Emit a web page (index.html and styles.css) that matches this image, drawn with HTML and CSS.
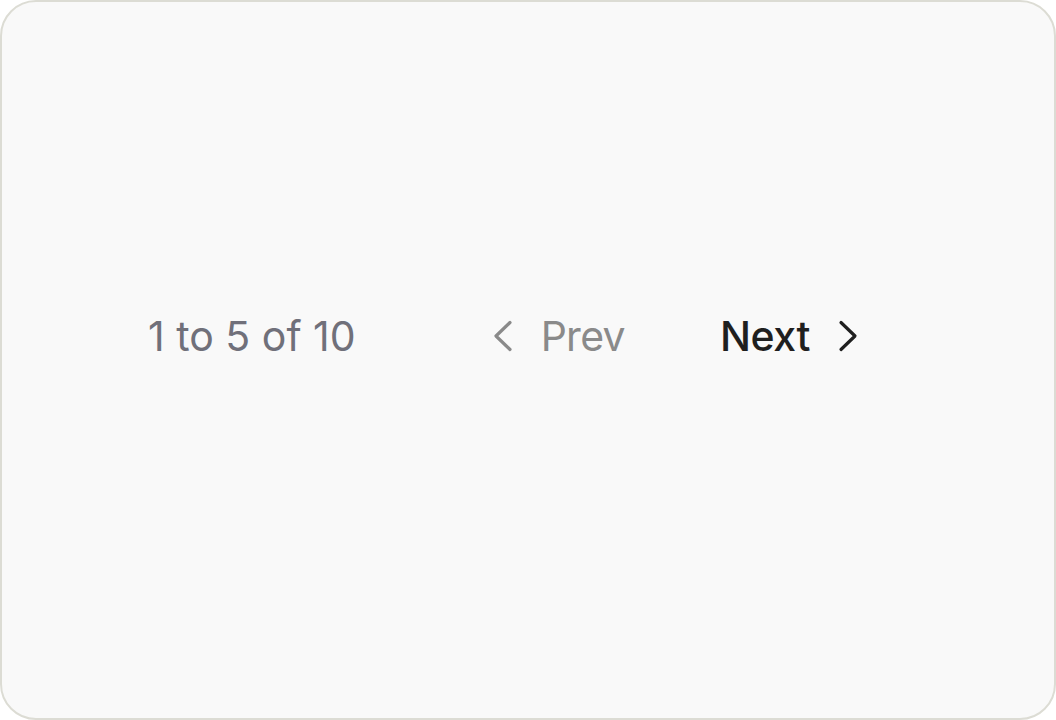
FILE: index.html
```html
<!DOCTYPE html>
<html>
<head>
<meta charset="utf-8">
<link rel="stylesheet" href="styles.css">
</head>
<body>
<div class="card">
  <nav class="pager">
    <span class="count">1 to 5 of 10</span>
    <div class="buttons">
      <button class="btn prev" disabled>
        <svg class="chev" width="20" height="32" viewBox="0 0 20 32"><path d="M17 2.5 L3 16 L17 29.5" fill="none" stroke="currentColor" stroke-width="3.2" stroke-linecap="round" stroke-linejoin="round"/></svg>
        <span>Prev</span>
      </button>
      <button class="btn next">
        <span>Next</span>
        <svg class="chev" width="20" height="32" viewBox="0 0 20 32"><path d="M3 2.5 L17 16 L3 29.5" fill="none" stroke="currentColor" stroke-width="3.2" stroke-linecap="round" stroke-linejoin="round"/></svg>
      </button>
    </div>
  </nav>
</div>
</body>
</html>
```
FILE: styles.css
```css
html, body {
  margin: 0;
  padding: 0;
  background: #ffffff;
}
.card {
  box-sizing: border-box;
  width: 1056px;
  height: 720px;
  border: 2px solid #dcdcd4;
  border-radius: 36px;
  background: #f9f9f9;
  display: flex;
  align-items: center;
  padding-left: 146px;
  padding-bottom: 48px;
  font-family: Inter, "Noto Sans", sans-serif;
}
.pager {
  display: flex;
  align-items: center;
  gap: 137px;
}
.count {
  font-size: 41px;
  color: #70707a;
  letter-spacing: 0;
}
.buttons {
  display: flex;
  align-items: center;
  gap: 95px;
}
.btn {
  display: flex;
  align-items: center;
  gap: 28px;
  background: none;
  border: none;
  padding: 0;
  font-family: inherit;
  font-size: 41px;
  letter-spacing: -0.7px;
}
.prev { color: #8a8a8a; }
.next { color: #1f1f1f; font-weight: 500; letter-spacing: -0.4px; }
.chev { display: block; }
```
